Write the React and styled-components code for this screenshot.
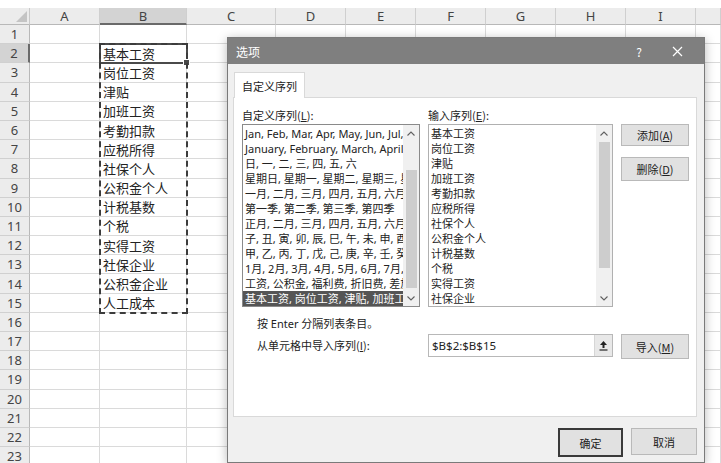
import React from 'react';
import styled, { createGlobalStyle, css } from 'styled-components';

const GlobalStyle = createGlobalStyle`
  html, body {
    margin: 0;
    padding: 0;
    background: #fff;
  }
  body {
    font-family: "Noto Sans", "Noto Sans CJK SC", sans-serif;
    overflow: hidden;
  }
`

const Page = styled.div`
  position: relative;
  width: 721px;
  height: 463px;
  padding-top: 8px;
  box-sizing: border-box;
  overflow: hidden;
  background: #fff;
`

const Sheet = styled.div`
  display: grid;
  grid-template-columns: 30px 70px 87px 89px repeat(6, 70px) 1fr;
  grid-template-rows: 17px repeat(23, 19.2px);
`

const Corner = styled.div`
  position: relative;
  background: #ececec;
  border-right: 1px solid #c9c9c9;
  border-bottom: 1px solid #b8b8b8;
  box-sizing: border-box;
  &::after {
    content: '';
    position: absolute;
    right: 2px;
    bottom: 2px;
    border-left: 11px solid transparent;
    border-bottom: 11px solid #c4c4c4;
  }
`

const ColHead = styled.div`
  display: flex;
  align-items: center;
  justify-content: center;
  background: ${p => (p.$active ? '#d3d3d3' : '#ececec')};
  border-right: 1px solid #cfcfcf;
  border-bottom: ${p => (p.$active ? '2px solid #6a6a6a' : '1px solid #b8b8b8')};
  box-sizing: border-box;
  font-size: 13px;
  color: #444;
`

const RowHead = styled.div`
  display: flex;
  align-items: center;
  justify-content: center;
  background: ${p => (p.$active ? '#d3d3d3' : '#ececec')};
  border-right: ${p => (p.$active ? '2px solid #6a6a6a' : '1px solid #b8b8b8')};
  border-bottom: 1px solid #d0d0d0;
  box-sizing: border-box;
  font-size: 13px;
  color: #444;
`

const Cell = styled.div`
  display: flex;
  align-items: center;
  padding-left: 3px;
  border-right: 1px solid #dadada;
  border-bottom: 1px solid #dadada;
  box-sizing: border-box;
  font-family: "Noto Sans CJK SC", sans-serif;
  font-size: 13px;
  color: #222;
  white-space: nowrap;
  overflow: hidden;
`

const ActiveCell = styled.div`
  position: absolute;
  left: 99px;
  top: 43px;
  width: 89px;
  height: 21px;
  border: 2px solid #4a4a4a;
  box-sizing: border-box;
  &::after {
    content: '';
    position: absolute;
    right: -4px;
    bottom: -4px;
    width: 5px;
    height: 5px;
    background: #4a4a4a;
    border: 1px solid #fff;
  }
`

const Marquee = styled.div`
  position: absolute;
  left: 99px;
  top: 43px;
  width: 89px;
  height: 271px;
  border: 2px dashed #3c3c3c;
  box-sizing: border-box;
`

/* ---------- dialog ---------- */

const threeCols = css`
  display: grid;
  grid-template-columns: 178px 185px 68px;
  column-gap: 8px;
`

const Dialog = styled.div`
  position: absolute;
  left: 227px;
  top: 37px;
  width: 478px;
  height: 426px;
  display: flex;
  flex-direction: column;
  background: #f0f0f0;
  border: 1px solid #7a7a7a;
  box-sizing: border-box;
  box-shadow: 0 2px 10px rgba(0, 0, 0, 0.28);
  font-family: "Noto Sans", "Noto Sans CJK SC", sans-serif;
  font-size: 11px;
  color: #222;
`

const TitleBar = styled.div`
  height: 26px;
  display: flex;
  align-items: center;
  padding: 0 8px;
  background: #7f7f7f;
  color: #fff;
  font-family: "Noto Sans CJK SC", sans-serif;
  font-size: 12px;
`

const Title = styled.div`
  flex: 1;
`

const TitleButton = styled.div`
  width: 38px;
  display: flex;
  justify-content: center;
  align-items: center;
  font-size: 12px;
`

const Body = styled.div`
  flex: 1;
  display: flex;
  flex-direction: column;
  padding: 0 7px 0 5px;
`

const TabStrip = styled.div`
  height: 33px;
  display: flex;
  align-items: flex-end;
`

const Tab = styled.div`
  height: 25px;
  margin-left: 1px;
  margin-bottom: -1px;
  padding: 0 7px;
  display: flex;
  align-items: center;
  background: #fff;
  border: 1px solid #d9d9d9;
  border-bottom: none;
  position: relative;
  z-index: 1;
  font-family: "Noto Sans CJK SC", sans-serif;
`

const Panel = styled.div`
  height: 320px;
  background: #fff;
  border: 1px solid #d9d9d9;
  box-sizing: border-box;
  padding: 9px 0 0 8px;
`

const Columns = styled.div`
  ${threeCols}
  grid-template-rows: 17px 183px;
`

const Label = styled.div`
  font-family: "Noto Sans CJK SC", sans-serif;
  line-height: 16px;
  white-space: nowrap;
  u { text-decoration: underline; }
`

const ListBox = styled.div`
  display: flex;
  border: 1px solid ${p => p.$border};
  background: #fff;
  overflow: hidden;
`

const Items = styled.div`
  flex: 1;
  min-width: 0;
  padding-top: 1px;
  font-family: "Noto Sans", "Noto Sans CJK SC", sans-serif;
  font-size: ${p => p.$size}px;
`

const Item = styled.div`
  height: 15px;
  line-height: 15px;
  padding-left: 2px;
  white-space: nowrap;
  overflow: hidden;
  background: ${p => (p.$selected ? '#555' : 'transparent')};
  color: ${p => (p.$selected ? '#fff' : '#222')};
`

const ScrollBar = styled.div`
  width: 16px;
  display: flex;
  flex-direction: column;
  background: #f0f0f0;
`

const Arrow = styled.div`
  height: 16px;
  display: flex;
  align-items: center;
  justify-content: center;
`

const Track = styled.div`
  flex: 1;
  display: flex;
  justify-content: center;
`

const Thumb = styled.div`
  width: 11px;
  background: #cdcdcd;
`

const ButtonStack = styled.div`
  display: flex;
  flex-direction: column;
  gap: 11px;
`

const Button = styled.div`
  height: ${p => p.$h || 23}px;
  width: ${p => p.$w || 68}px;
  display: flex;
  align-items: center;
  justify-content: center;
  box-sizing: border-box;
  background: #e1e1e1;
  border: ${p => (p.$default ? '2px solid #3a3a3a' : '1px solid #b9b9b9')};
  font-family: "Noto Sans CJK SC", sans-serif;
  font-size: 11px;
  color: #222;
  u { text-decoration: underline; }
`

const Hint = styled.div`
  margin: 9px 0 0 15px;
  line-height: 16px;
  font-family: "Noto Sans", "Noto Sans CJK SC", sans-serif;
`

const ImportRow = styled.div`
  ${threeCols}
  margin-top: 2px;
  align-items: start;
`

const ImportLabel = styled(Label)`
  padding-left: 15px;
  line-height: 22px;
`

const RangeInput = styled.div`
  height: 23px;
  display: flex;
  border: 1px solid #b8b8b8;
  box-sizing: border-box;
  background: #fff;
`

const RangeText = styled.div`
  flex: 1;
  display: flex;
  align-items: center;
  padding-left: 3px;
  font-family: "Noto Sans", sans-serif;
  font-size: 11.5px;
`

const PickButton = styled.div`
  width: 17px;
  display: flex;
  align-items: center;
  justify-content: center;
  background: #e8e8e8;
  border-left: 1px solid #d6d6d6;
`

const Footer = styled.div`
  display: flex;
  justify-content: flex-end;
  gap: 8px;
  padding-top: 11px;
`

const Chevron = ({ up }) => (
  <svg width="8" height="5" viewBox="0 0 8 5">
    <path
      d={up ? 'M0.5 4.5 L4 1 L7.5 4.5' : 'M0.5 0.5 L4 4 L7.5 0.5'}
      fill="none"
      stroke="#606060"
      strokeWidth="1.1"
    />
  </svg>
)

const Scroll = ({ offset, size }) => (
  <ScrollBar>
    <Arrow><Chevron up /></Arrow>
    <Track>
      <Thumb style={{ marginTop: offset, height: size }} />
    </Track>
    <Arrow><Chevron /></Arrow>
  </ScrollBar>
)

const COLS = ['', 'A', 'B', 'C', 'D', 'E', 'F', 'G', 'H', 'I', ''];

const VALUES = {
  2: '基本工资',
  3: '岗位工资',
  4: '津贴',
  5: '加班工资',
  6: '考勤扣款',
  7: '应税所得',
  8: '社保个人',
  9: '公积金个人',
  10: '计税基数',
  11: '个税',
  12: '实得工资',
  13: '社保企业',
  14: '公积金企业',
  15: '人工成本',
};

const LISTS = [
  'Jan, Feb, Mar, Apr, May, Jun, Jul, Aug, Sep, Oct, Nov, Dec',
  'January, February, March, April, May, June, July',
  '日, 一, 二, 三, 四, 五, 六',
  '星期日, 星期一, 星期二, 星期三, 星期四, 星期五, 星期六',
  '一月, 二月, 三月, 四月, 五月, 六月, 七月, 八月',
  '第一季, 第二季, 第三季, 第四季',
  '正月, 二月, 三月, 四月, 五月, 六月, 七月, 八月',
  '子, 丑, 寅, 卯, 辰, 巳, 午, 未, 申, 酉, 戌, 亥',
  '甲, 乙, 丙, 丁, 戊, 己, 庚, 辛, 壬, 癸',
  '1月, 2月, 3月, 4月, 5月, 6月, 7月, 8月, 9月',
  '工资, 公积金, 福利费, 折旧费, 差旅费',
  '基本工资, 岗位工资, 津贴, 加班工资, 考勤扣款',
];

const ENTRIES = [
  '基本工资', '岗位工资', '津贴', '加班工资', '考勤扣款', '应税所得',
  '社保个人', '公积金个人', '计税基数', '个税', '实得工资', '社保企业',
];

class App extends React.Component {
  renderSheet() {
    const cells = [];
    COLS.forEach((c, i) => {
      if (i === 0) cells.push(<Corner key="corner" />);
      else cells.push(<ColHead key={'h' + i} $active={c === 'B'}>{c}</ColHead>);
    });
    for (let r = 1; r <= 23; r++) {
      cells.push(<RowHead key={'r' + r} $active={r === 2}>{r}</RowHead>);
      for (let c = 1; c < COLS.length; c++) {
        cells.push(
          <Cell key={r + '-' + c}>{COLS[c] === 'B' ? VALUES[r] : null}</Cell>
        );
      }
    }
    return <Sheet>{cells}</Sheet>;
  }

  render() {
    return (
      <Page>
        <GlobalStyle />
        {this.renderSheet()}
        <ActiveCell />
        <Marquee />

        <Dialog>
          <TitleBar>
            <Title>选项</Title>
            <TitleButton>?</TitleButton>
            <TitleButton>
              <svg width="11" height="11" viewBox="0 0 11 11">
                <path d="M1 1 L10 10 M10 1 L1 10" stroke="#fff" strokeWidth="1.2" />
              </svg>
            </TitleButton>
          </TitleBar>
          <Body>
            <TabStrip>
              <Tab>自定义序列</Tab>
            </TabStrip>
            <Panel>
              <Columns>
                <Label>自定义序列(<u>L</u>):</Label>
                <Label>输入序列(<u>E</u>):</Label>
                <div />
                <ListBox $border="#8a8a8a">
                  <Items $size={11}>
                    {LISTS.map((t, i) => (
                      <Item key={i} $selected={i === LISTS.length - 1}>{t}</Item>
                    ))}
                  </Items>
                  <Scroll offset={29} size={118} />
                </ListBox>
                <ListBox $border="#b0b0b0">
                  <Items $size={11}>
                    {ENTRIES.map((t, i) => (
                      <Item key={i}>{t}</Item>
                    ))}
                  </Items>
                  <Scroll offset={1} size={126} />
                </ListBox>
                <ButtonStack>
                  <Button $h={22}>添加(<u>A</u>)</Button>
                  <Button $h={24}>删除(<u>D</u>)</Button>
                </ButtonStack>
              </Columns>
              <Hint>按 Enter 分隔列表条目。</Hint>
              <ImportRow>
                <ImportLabel>从单元格中导入序列(<u>I</u>):</ImportLabel>
                <RangeInput>
                  <RangeText>$B$2:$B$15</RangeText>
                  <PickButton>
                    <svg width="9" height="11" viewBox="0 0 9 11">
                      <path d="M4.5 1 L8 5 L5.5 5 L5.5 8 L3.5 8 L3.5 5 L1 5 Z" fill="#222" />
                      <path d="M0.5 10 L8.5 10" stroke="#222" strokeWidth="1.2" />
                    </svg>
                  </PickButton>
                </RangeInput>
                <Button $h={25}>导入(<u>M</u>)</Button>
              </ImportRow>
            </Panel>
            <Footer>
              <Button $default $w={65} $h={29}>确定</Button>
              <Button $w={66} $h={27}>取消</Button>
            </Footer>
          </Body>
        </Dialog>
      </Page>
    );
  }
}

export default App;
